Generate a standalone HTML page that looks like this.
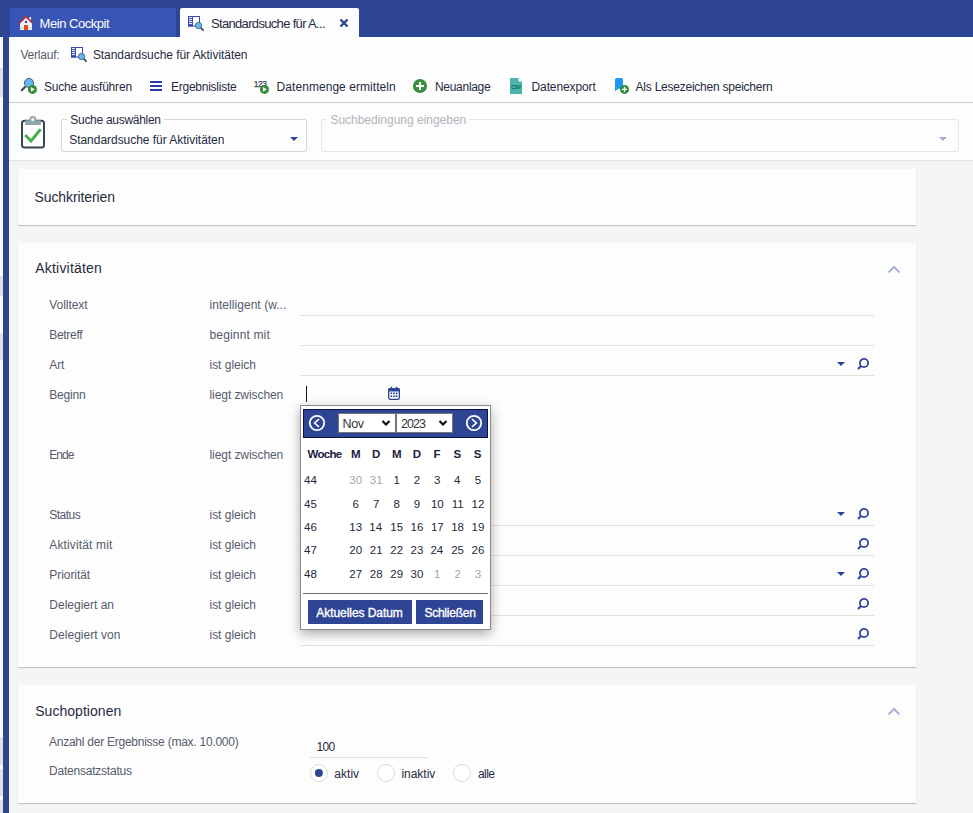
<!DOCTYPE html>
<html><head><meta charset="utf-8"><title>Standardsuche</title>
<style>
html,body{margin:0;padding:0;}
body{width:973px;height:813px;overflow:hidden;position:relative;background:#fff;font-family:"Liberation Sans", sans-serif;}
.t{position:absolute;white-space:nowrap;line-height:20px;font-family:"Liberation Sans", sans-serif;}
.r{position:absolute;}
svg.r{overflow:visible;}
</style></head><body>
<div class="r" style="left:0px;top:37px;width:3px;height:776px;background:#fbfbfb;"></div>
<div class="r" style="left:0px;top:68px;width:3px;height:29px;background:#e2e2e2;"></div>
<div class="r" style="left:0px;top:276px;width:3px;height:20px;background:#e2e2e2;"></div>
<div class="r" style="left:0px;top:333px;width:3px;height:27px;background:#e2e2e2;"></div>
<div class="r" style="left:0px;top:737px;width:3px;height:28px;background:#e2e2e2;"></div>
<div class="r" style="left:0px;top:769px;width:3px;height:27px;background:#e2e2e2;"></div>
<div class="r" style="left:0px;top:800px;width:3px;height:13px;background:#e2e2e2;"></div>
<div class="r" style="left:0px;top:0px;width:973px;height:37px;background:#2d4593;"></div>
<div class="r" style="left:3px;top:36px;width:970px;height:1px;background:#2a43a0;"></div>
<div class="r" style="left:3px;top:37px;width:6px;height:776px;background:#2d4593;"></div>
<div class="r" style="left:10px;top:8px;width:166px;height:29px;background:#3854b4;border-radius:2px 2px 0 0;"></div>
<div class="r" style="left:180px;top:8px;width:179px;height:29px;background:#fdfdfd;border-radius:2px 2px 0 0;"></div>
<div class="r" style="left:9px;top:37px;width:964px;height:65px;background:#fdfdfd;"></div>
<div class="r" style="left:9px;top:102px;width:964px;height:1px;background:#cccccc;"></div>
<div class="r" style="left:9px;top:103px;width:964px;height:57px;background:#fdfdfd;"></div>
<div class="r" style="left:9px;top:160px;width:964px;height:1px;background:#e3e3e3;"></div>
<div class="r" style="left:9px;top:161px;width:964px;height:652px;background:#f5f5f5;"></div>
<div class="r" style="left:18px;top:169px;width:898px;height:56px;background:#fdfdfd;box-shadow:0 1px 1px rgba(0,0,0,.2);"></div>
<div class="r" style="left:18px;top:243px;width:898px;height:424px;background:#fdfdfd;box-shadow:0 1px 1px rgba(0,0,0,.2);"></div>
<div class="r" style="left:18px;top:685px;width:898px;height:118px;background:#fdfdfd;box-shadow:0 1px 1px rgba(0,0,0,.2);"></div>
<div class="t" style="top:14px;font-size:13px;color:#ffffff;letter-spacing:-0.466px;left:39.60px;">Mein Cockpit</div>
<div class="t" style="top:14px;font-size:13px;color:#272b3f;letter-spacing:-0.673px;left:211.00px;">Standardsuche für A...</div>
<div class="t" style="top:45px;font-size:12px;color:#555b68;letter-spacing:-0.223px;left:20.50px;">Verlauf:</div>
<div class="t" style="top:45px;font-size:12px;color:#272b3f;letter-spacing:-0.053px;left:92.90px;">Standardsuche für Aktivitäten</div>
<div class="t" style="top:77px;font-size:12px;color:#272b3f;letter-spacing:-0.190px;left:44.00px;">Suche ausführen</div>
<div class="t" style="top:77px;font-size:12px;color:#272b3f;letter-spacing:-0.252px;left:171.00px;">Ergebnisliste</div>
<div class="t" style="top:77px;font-size:12px;color:#272b3f;letter-spacing:0.053px;left:276.60px;">Datenmenge ermitteln</div>
<div class="t" style="top:77px;font-size:12px;color:#272b3f;letter-spacing:-0.297px;left:435.00px;">Neuanlage</div>
<div class="t" style="top:77px;font-size:12px;color:#272b3f;letter-spacing:-0.104px;left:531.50px;">Datenexport</div>
<div class="t" style="top:77px;font-size:12px;color:#272b3f;letter-spacing:-0.237px;left:635.60px;">Als Lesezeichen speichern</div>
<div class="r" style="left:61px;top:119px;width:244px;height:31px;border:1px solid #d8d8d8;border-radius:2px;"></div>
<div class="r" style="left:67px;top:115px;width:97px;height:8px;background:#fdfdfd;"></div>
<div class="t" style="top:110px;font-size:12px;color:#272b3f;letter-spacing:-0.290px;left:70.30px;">Suche auswählen</div>
<div class="t" style="top:130px;font-size:12px;color:#272b3f;letter-spacing:-0.032px;left:69.20px;">Standardsuche für Aktivitäten</div>
<svg class="r" style="left:290px;top:137px" width="8" height="4"><path d="M0 0H8L4 4Z" fill="#2e4595"/></svg>
<div class="r" style="left:321px;top:119px;width:636px;height:31px;border:1px solid #e6e6e6;border-radius:2px;"></div>
<div class="r" style="left:326px;top:115px;width:143px;height:8px;background:#fdfdfd;"></div>
<div class="t" style="top:110px;font-size:12px;color:#b0b4bc;letter-spacing:-0.012px;left:330.40px;">Suchbedingung eingeben</div>
<svg class="r" style="left:939px;top:137px" width="8" height="4"><path d="M0 0H8L4 4Z" fill="#a3abd0"/></svg>
<div class="t" style="top:187px;font-size:14px;color:#272b3f;letter-spacing:-0.101px;left:34.50px;">Suchkriterien</div>
<div class="t" style="top:258px;font-size:14px;color:#272b3f;letter-spacing:0.190px;left:35.30px;">Aktivitäten</div>
<div class="t" style="top:701px;font-size:14px;color:#272b3f;letter-spacing:0.042px;left:35.20px;">Suchoptionen</div>
<svg class="r" style="left:887px;top:265px" width="14" height="9"><path d="M1.6 7.4L7 2L12.4 7.4" fill="none" stroke="#a5afd8" stroke-width="2"/></svg>
<svg class="r" style="left:887px;top:707px" width="14" height="9"><path d="M1.6 7.4L7 2L12.4 7.4" fill="none" stroke="#a5afd8" stroke-width="2"/></svg>
<div class="t" style="top:295px;font-size:12px;color:#565c6c;letter-spacing:-0.065px;left:49.30px;">Volltext</div>
<div class="t" style="top:295px;font-size:12px;color:#565c6c;letter-spacing:0.050px;left:209.50px;">intelligent (w...</div>
<div class="r" style="left:300px;top:315px;width:574px;height:1px;background:#e0e0e0;"></div>
<div class="t" style="top:325px;font-size:12px;color:#565c6c;letter-spacing:-0.316px;left:49.30px;">Betreff</div>
<div class="t" style="top:325px;font-size:12px;color:#565c6c;letter-spacing:0.153px;left:209.50px;">beginnt mit</div>
<div class="r" style="left:300px;top:345px;width:574px;height:1px;background:#e0e0e0;"></div>
<div class="t" style="top:355px;font-size:12px;color:#565c6c;letter-spacing:-0.150px;left:49.30px;">Art</div>
<div class="t" style="top:355px;font-size:12px;color:#565c6c;letter-spacing:-0.024px;left:209.50px;">ist gleich</div>
<div class="r" style="left:300px;top:375px;width:574px;height:1px;background:#e0e0e0;"></div>
<svg class="r" style="left:837px;top:362px" width="8" height="4"><path d="M0 0H8L4 4Z" fill="#2e4595"/></svg>
<svg class="r" style="left:857px;top:358px" width="14" height="14"><circle cx="7" cy="5" r="4.1" fill="none" stroke="#32479a" stroke-width="1.8"/><path d="M4.3 7.7L1 11" stroke="#32479a" stroke-width="2.1"/></svg>
<div class="t" style="top:385px;font-size:12px;color:#565c6c;letter-spacing:-0.178px;left:49.30px;">Beginn</div>
<div class="t" style="top:385px;font-size:12px;color:#565c6c;letter-spacing:-0.071px;left:209.50px;">liegt zwischen</div>
<div class="t" style="top:445px;font-size:12px;color:#565c6c;letter-spacing:-0.951px;left:49.30px;">Ende</div>
<div class="t" style="top:445px;font-size:12px;color:#565c6c;letter-spacing:-0.071px;left:209.50px;">liegt zwischen</div>
<div class="t" style="top:505px;font-size:12px;color:#565c6c;letter-spacing:-0.524px;left:49.30px;">Status</div>
<div class="t" style="top:505px;font-size:12px;color:#565c6c;letter-spacing:-0.024px;left:209.50px;">ist gleich</div>
<div class="r" style="left:300px;top:525px;width:574px;height:1px;background:#e0e0e0;"></div>
<svg class="r" style="left:837px;top:512px" width="8" height="4"><path d="M0 0H8L4 4Z" fill="#2e4595"/></svg>
<svg class="r" style="left:857px;top:508px" width="14" height="14"><circle cx="7" cy="5" r="4.1" fill="none" stroke="#32479a" stroke-width="1.8"/><path d="M4.3 7.7L1 11" stroke="#32479a" stroke-width="2.1"/></svg>
<div class="t" style="top:535px;font-size:12px;color:#565c6c;letter-spacing:0.141px;left:49.30px;">Aktivität mit</div>
<div class="t" style="top:535px;font-size:12px;color:#565c6c;letter-spacing:-0.024px;left:209.50px;">ist gleich</div>
<div class="r" style="left:300px;top:555px;width:574px;height:1px;background:#e0e0e0;"></div>
<svg class="r" style="left:857px;top:538px" width="14" height="14"><circle cx="7" cy="5" r="4.1" fill="none" stroke="#32479a" stroke-width="1.8"/><path d="M4.3 7.7L1 11" stroke="#32479a" stroke-width="2.1"/></svg>
<div class="t" style="top:565px;font-size:12px;color:#565c6c;letter-spacing:-0.064px;left:49.30px;">Priorität</div>
<div class="t" style="top:565px;font-size:12px;color:#565c6c;letter-spacing:-0.024px;left:209.50px;">ist gleich</div>
<div class="r" style="left:300px;top:585px;width:574px;height:1px;background:#e0e0e0;"></div>
<svg class="r" style="left:837px;top:572px" width="8" height="4"><path d="M0 0H8L4 4Z" fill="#2e4595"/></svg>
<svg class="r" style="left:857px;top:568px" width="14" height="14"><circle cx="7" cy="5" r="4.1" fill="none" stroke="#32479a" stroke-width="1.8"/><path d="M4.3 7.7L1 11" stroke="#32479a" stroke-width="2.1"/></svg>
<div class="t" style="top:595px;font-size:12px;color:#565c6c;left:49.30px;">Delegiert an</div>
<div class="t" style="top:595px;font-size:12px;color:#565c6c;letter-spacing:-0.024px;left:209.50px;">ist gleich</div>
<div class="r" style="left:300px;top:615px;width:574px;height:1px;background:#e0e0e0;"></div>
<svg class="r" style="left:857px;top:598px" width="14" height="14"><circle cx="7" cy="5" r="4.1" fill="none" stroke="#32479a" stroke-width="1.8"/><path d="M4.3 7.7L1 11" stroke="#32479a" stroke-width="2.1"/></svg>
<div class="t" style="top:625px;font-size:12px;color:#565c6c;letter-spacing:0.039px;left:49.30px;">Delegiert von</div>
<div class="t" style="top:625px;font-size:12px;color:#565c6c;letter-spacing:-0.024px;left:209.50px;">ist gleich</div>
<div class="r" style="left:300px;top:645px;width:574px;height:1px;background:#e0e0e0;"></div>
<svg class="r" style="left:857px;top:628px" width="14" height="14"><circle cx="7" cy="5" r="4.1" fill="none" stroke="#32479a" stroke-width="1.8"/><path d="M4.3 7.7L1 11" stroke="#32479a" stroke-width="2.1"/></svg>
<div class="r" style="left:306px;top:386px;width:1px;height:16px;background:#0e1332;"></div>
<svg class="r" style="left:387px;top:385px" width="14" height="16"><rect x="1.65" y="3.65" width="10.7" height="10.7" rx="1.6" fill="none" stroke="#2e4595" stroke-width="1.3"/><rect x="1" y="3" width="12" height="3.6" rx="1.5" fill="#2e4595"/><rect x="3.6" y="1.8" width="1.5" height="2" fill="#2e4595"/><rect x="8.9" y="1.8" width="1.5" height="2" fill="#2e4595"/>
<g fill="#2e4595"><rect x="3.5" y="7.5" width="1.7" height="1.6"/><rect x="6.2" y="7.5" width="1.7" height="1.6"/><rect x="8.8" y="7.5" width="1.7" height="1.6"/><rect x="3.5" y="10.4" width="1.7" height="1.6"/><rect x="6.2" y="10.4" width="1.7" height="1.6"/><rect x="8.8" y="10.4" width="1.7" height="1.6"/></g></svg>
<div class="t" style="top:732px;font-size:12px;color:#565c6c;letter-spacing:-0.247px;left:49.00px;">Anzahl der Ergebnisse (max. 10.000)</div>
<div class="t" style="top:761px;font-size:12px;color:#565c6c;letter-spacing:-0.217px;left:49.00px;">Datensatzstatus</div>
<div class="t" style="top:737px;font-size:12px;color:#272b3f;letter-spacing:-0.774px;left:316.60px;">100</div>
<div class="r" style="left:310px;top:757px;width:118px;height:1px;background:#e0e0e0;"></div>
<svg class="r" style="left:310px;top:764px" width="18" height="18"><circle cx="9" cy="9" r="8.5" fill="#fff" stroke="#dcdcdc"/><circle cx="8.9" cy="9" r="4" fill="#2e4595"/></svg>
<svg class="r" style="left:377px;top:764px" width="18" height="18"><circle cx="9" cy="9" r="8.5" fill="#fff" stroke="#dcdcdc"/></svg>
<svg class="r" style="left:453px;top:764px" width="18" height="18"><circle cx="9" cy="9" r="8.5" fill="#fff" stroke="#dcdcdc"/></svg>
<div class="t" style="top:764px;font-size:12px;color:#272b3f;letter-spacing:0.032px;left:334.30px;">aktiv</div>
<div class="t" style="top:764px;font-size:12px;color:#272b3f;letter-spacing:-0.019px;left:401.40px;">inaktiv</div>
<div class="t" style="top:764px;font-size:12px;color:#272b3f;letter-spacing:-0.569px;left:478.00px;">alle</div>
<div class="r" style="left:300px;top:405px;width:189px;height:223px;background:#fff;border:1px solid #8a8a8a;box-shadow:0 4px 11px rgba(0,0,0,.33);"></div>
<div class="r" style="left:303px;top:409px;width:185px;height:29px;background:#2e4595;box-sizing:border-box;border:1px solid #0b1240;"></div>
<svg class="r" style="left:308px;top:414px" width="18" height="18"><circle cx="9" cy="9" r="7.2" fill="none" stroke="#fff" stroke-width="1.8"/><path d="M11 5.1L6.6 9L11 12.8" fill="none" stroke="#fff" stroke-width="1.6"/></svg>
<svg class="r" style="left:465px;top:414px" width="18" height="18"><circle cx="9" cy="9" r="7.2" fill="none" stroke="#fff" stroke-width="1.8"/><path d="M7 5.1L11.4 9L7 12.8" fill="none" stroke="#fff" stroke-width="1.6"/></svg>
<div class="r" style="left:338px;top:413px;width:56px;height:18px;background:#fff;border:1px solid #767676;"></div>
<div class="r" style="left:396px;top:413px;width:55px;height:18px;background:#fff;border:1px solid #767676;"></div>
<div class="t" style="top:414px;font-size:12.5px;color:#333;letter-spacing:-0.290px;left:342.40px;">Nov</div>
<div class="t" style="top:414px;font-size:12.5px;color:#333;letter-spacing:-0.985px;left:401.00px;">2023</div>
<svg class="r" style="left:381px;top:419px" width="10" height="7"><path d="M1.5 2L5 5.5L8.5 2" fill="none" stroke="#111" stroke-width="2.2"/></svg>
<svg class="r" style="left:438px;top:419px" width="10" height="7"><path d="M1.5 2L5 5.5L8.5 2" fill="none" stroke="#111" stroke-width="2.2"/></svg>
<div class="t" style="top:444px;font-size:11.5px;color:#1b2140;font-weight:bold;letter-spacing:-0.723px;left:307.50px;">Woche</div>
<div class="t" style="top:444px;font-size:11.5px;color:#1b2140;font-weight:bold;left:351.00px;">M</div>
<div class="t" style="top:444px;font-size:11.5px;color:#1b2140;font-weight:bold;left:372.00px;">D</div>
<div class="t" style="top:444px;font-size:11.5px;color:#1b2140;font-weight:bold;left:392.00px;">M</div>
<div class="t" style="top:444px;font-size:11.5px;color:#1b2140;font-weight:bold;left:412.80px;">D</div>
<div class="t" style="top:444px;font-size:11.5px;color:#1b2140;font-weight:bold;left:433.60px;">F</div>
<div class="t" style="top:444px;font-size:11.5px;color:#1b2140;font-weight:bold;left:453.40px;">S</div>
<div class="t" style="top:444px;font-size:11.5px;color:#1b2140;font-weight:bold;left:473.80px;">S</div>
<div class="t" style="top:470px;font-size:11.5px;color:#222a3c;left:304.00px;">44</div>
<div class="t" style="top:470px;font-size:11.5px;color:#a3a6ad;left:349.30px;">30</div>
<div class="t" style="top:470px;font-size:11.5px;color:#a3a6ad;left:369.80px;">31</div>
<div class="t" style="top:470px;font-size:11.5px;color:#222a3c;left:393.50px;">1</div>
<div class="t" style="top:470px;font-size:11.5px;color:#222a3c;left:413.80px;">2</div>
<div class="t" style="top:470px;font-size:11.5px;color:#222a3c;left:434.10px;">3</div>
<div class="t" style="top:470px;font-size:11.5px;color:#222a3c;left:453.90px;">4</div>
<div class="t" style="top:470px;font-size:11.5px;color:#222a3c;left:474.80px;">5</div>
<div class="t" style="top:494px;font-size:11.5px;color:#222a3c;left:304.00px;">45</div>
<div class="t" style="top:494px;font-size:11.5px;color:#222a3c;left:352.50px;">6</div>
<div class="t" style="top:494px;font-size:11.5px;color:#222a3c;left:373.00px;">7</div>
<div class="t" style="top:494px;font-size:11.5px;color:#222a3c;left:393.50px;">8</div>
<div class="t" style="top:494px;font-size:11.5px;color:#222a3c;left:413.80px;">9</div>
<div class="t" style="top:494px;font-size:11.5px;color:#222a3c;left:430.90px;">10</div>
<div class="t" style="top:494px;font-size:11.5px;color:#222a3c;left:451.63px;">11</div>
<div class="t" style="top:494px;font-size:11.5px;color:#222a3c;left:471.60px;">12</div>
<div class="t" style="top:517px;font-size:11.5px;color:#222a3c;left:304.00px;">46</div>
<div class="t" style="top:517px;font-size:11.5px;color:#222a3c;left:349.30px;">13</div>
<div class="t" style="top:517px;font-size:11.5px;color:#222a3c;left:369.30px;">14</div>
<div class="t" style="top:517px;font-size:11.5px;color:#222a3c;left:390.30px;">15</div>
<div class="t" style="top:517px;font-size:11.5px;color:#222a3c;left:410.60px;">16</div>
<div class="t" style="top:517px;font-size:11.5px;color:#222a3c;left:430.90px;">17</div>
<div class="t" style="top:517px;font-size:11.5px;color:#222a3c;left:451.20px;">18</div>
<div class="t" style="top:517px;font-size:11.5px;color:#222a3c;left:471.60px;">19</div>
<div class="t" style="top:540px;font-size:11.5px;color:#222a3c;left:304.00px;">47</div>
<div class="t" style="top:540px;font-size:11.5px;color:#222a3c;left:349.30px;">20</div>
<div class="t" style="top:540px;font-size:11.5px;color:#222a3c;left:369.80px;">21</div>
<div class="t" style="top:540px;font-size:11.5px;color:#222a3c;left:390.30px;">22</div>
<div class="t" style="top:540px;font-size:11.5px;color:#222a3c;left:410.60px;">23</div>
<div class="t" style="top:540px;font-size:11.5px;color:#222a3c;left:430.40px;">24</div>
<div class="t" style="top:540px;font-size:11.5px;color:#222a3c;left:451.20px;">25</div>
<div class="t" style="top:540px;font-size:11.5px;color:#222a3c;left:471.60px;">26</div>
<div class="t" style="top:564px;font-size:11.5px;color:#222a3c;left:304.00px;">48</div>
<div class="t" style="top:564px;font-size:11.5px;color:#222a3c;left:349.30px;">27</div>
<div class="t" style="top:564px;font-size:11.5px;color:#222a3c;left:369.80px;">28</div>
<div class="t" style="top:564px;font-size:11.5px;color:#222a3c;left:390.30px;">29</div>
<div class="t" style="top:564px;font-size:11.5px;color:#222a3c;left:410.60px;">30</div>
<div class="t" style="top:564px;font-size:11.5px;color:#a3a6ad;left:434.10px;">1</div>
<div class="t" style="top:564px;font-size:11.5px;color:#a3a6ad;left:454.40px;">2</div>
<div class="t" style="top:564px;font-size:11.5px;color:#a3a6ad;left:474.80px;">3</div>
<div class="r" style="left:303px;top:593px;width:185px;height:1px;background:#6e6e6e;"></div>
<div class="r" style="left:308px;top:600px;width:104px;height:24px;background:#2e4595;"></div>
<div class="r" style="left:416px;top:600px;width:67px;height:24px;background:#2e4595;"></div>
<div class="t" style="top:603px;font-size:12px;color:#fff;letter-spacing:-0.062px;left:316.30px;-webkit-text-stroke:0.35px #fff;">Aktuelles Datum</div>
<div class="t" style="top:603px;font-size:12px;color:#fff;letter-spacing:-0.236px;left:424.40px;-webkit-text-stroke:0.35px #fff;">Schließen</div>
<svg class="r" style="left:339px;top:18px" width="10" height="10"><path d="M1.5 1.5L8.5 8.5M8.5 1.5L1.5 8.5" stroke="#2e4595" stroke-width="2.4"/></svg>
<svg class="r" style="left:18px;top:15px" width="16" height="16">
<path d="M2 7.9L8 2.2L14 7.9V15H2Z" fill="#eef0f8"/><rect x="2" y="12.6" width="12" height="1.2" fill="#cfd3ea"/>
<rect x="11.3" y="2.2" width="1.8" height="2.6" fill="#eef0f8"/>
<path d="M1.3 8.1L8 1.7L14.7 8.1" fill="none" stroke="#bf2d2d" stroke-width="1.5"/>
<rect x="7" y="6" width="2" height="2" fill="#0d47a1"/>
<rect x="6" y="10" width="4" height="5" fill="#e64a19"/>
</svg>
<svg class="r" style="left:188px;top:16px" width="17" height="16">
<rect x="0.5" y="0.5" width="11" height="9.5" fill="#fff" stroke="#3949ab" stroke-width="1"/>
<rect x="0" y="0" width="5" height="10.5" fill="#3949ab"/>
<g fill="#fff"><rect x="1" y="1.1" width="3" height="1"/><rect x="1" y="3.1" width="3" height="1"/><rect x="1" y="5.1" width="3" height="1"/><rect x="1" y="7.1" width="3" height="1"/></g>
<path d="M12.6 11.6L15.6 14.6" stroke="#37474f" stroke-width="1.7"/>
<circle cx="10.5" cy="9.5" r="3.2" fill="#64b5f6" stroke="#455a64" stroke-width="0.8"/>
</svg>
<svg class="r" style="left:71px;top:47px" width="17" height="16">
<rect x="0.5" y="0.5" width="11" height="9.5" fill="#fff" stroke="#3949ab" stroke-width="1"/>
<rect x="0" y="0" width="5" height="10.5" fill="#3949ab"/>
<g fill="#fff"><rect x="1" y="1.1" width="3" height="1"/><rect x="1" y="3.1" width="3" height="1"/><rect x="1" y="5.1" width="3" height="1"/><rect x="1" y="7.1" width="3" height="1"/></g>
<path d="M12.6 11.6L15.6 14.6" stroke="#37474f" stroke-width="1.7"/>
<circle cx="10.5" cy="9.5" r="3.2" fill="#64b5f6" stroke="#455a64" stroke-width="0.8"/>
</svg>
<svg class="r" style="left:20px;top:77px" width="18" height="18">
<path d="M5 10L1.8 13.3" stroke="#37474f" stroke-width="2" stroke-linecap="round"/>
<circle cx="9" cy="6" r="4.6" fill="#64b5f6" stroke="#4e4e4e" stroke-width="0.9"/>
<circle cx="12.5" cy="12.4" r="4.5" fill="#2e8b36"/><path d="M10.9 10.100000000000001L14.9 12.4L10.9 14.7Z" fill="#fff"/>
</svg>
<svg class="r" style="left:150px;top:80px" width="12" height="12"><g fill="#2a3aa8"><rect x="0" y="1" width="12" height="2"/><rect x="0" y="5" width="12" height="2"/><rect x="0" y="9" width="12" height="2"/></g></svg>
<svg class="r" style="left:253px;top:77px" width="18" height="18">
<text x="0.8" y="10" font-family="Liberation Sans" font-size="8.6" fill="#3d4f58" letter-spacing="-0.5" stroke="#3d4f58" stroke-width="0.25">123</text>
<circle cx="11.5" cy="12.4" r="4.5" fill="#2e8b36"/><path d="M9.9 10.100000000000001L13.9 12.4L9.9 14.7Z" fill="#fff"/>
</svg>
<svg class="r" style="left:412px;top:78px" width="16" height="16"><circle cx="8" cy="8" r="7.1" fill="#388e3c"/><path d="M4 8H12M8 4V12" stroke="#fff" stroke-width="2"/></svg>
<svg class="r" style="left:510px;top:78px" width="13" height="16">
<path d="M0 0H8.5L12 3.5V16H0Z" fill="#4db6ac"/><path d="M8.5 0V3.5H12Z" fill="#fff"/>
<text x="1.2" y="11" font-family="Liberation Sans" font-weight="bold" font-size="5" fill="#00695c" letter-spacing="-0.2">CSV</text>
</svg>
<svg class="r" style="left:614px;top:77px" width="18" height="18">
<path d="M1 2.5Q1 1 2.5 1H7.5Q9 1 9 2.5V14L5 11.5L1 14Z" fill="#2196f3"/>
<circle cx="10.5" cy="12.4" r="4.5" fill="#2e8b36"/><path d="M7.9 12.4H13.1M10.5 9.8V15.0" stroke="#fff" stroke-width="1.3"/>
</svg>
<svg class="r" style="left:21px;top:116px" width="25" height="33">
<rect x="1" y="4.8" width="22" height="26.7" rx="2.5" fill="#fff" stroke="#37474f" stroke-width="2"/>
<rect x="4" y="4.2" width="16" height="4.8" rx="1" fill="#90a4ae"/>
<circle cx="11.8" cy="3.5" r="3.4" fill="#90a4ae"/><circle cx="11.8" cy="3.5" r="1.5" fill="#fff"/>
<path d="M4.2 19L10 25L19.6 13.3" fill="none" stroke="#4caf50" stroke-width="3"/>
</svg>
</body></html>
